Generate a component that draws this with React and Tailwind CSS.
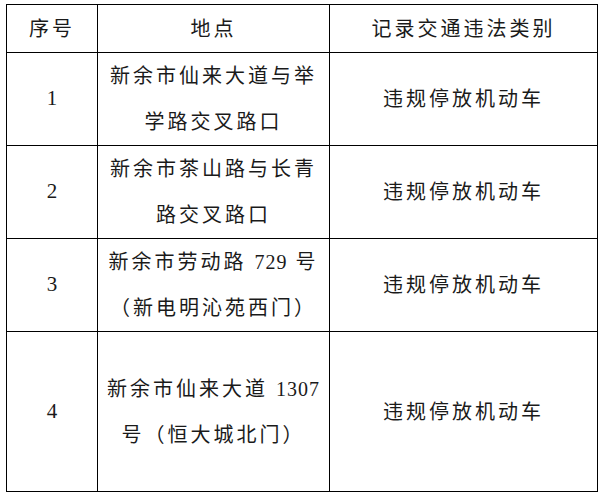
import React from 'react'

const Num = ({ children }) => <span className="tracking-[1px]">{children}</span>

const rows = [
  { no: '1', place: ['新余市仙来大道与举', '学路交叉路口'], h: 'h-[92px]' },
  { no: '2', place: ['新余市茶山路与长青', '路交叉路口'], h: 'h-[92px]' },
  {
    no: '3',
    place: [<>新余市劳动路 <Num>729</Num> 号</>, '（新电明沁苑西门）'],
    h: 'h-[93px]',
  },
  {
    no: '4',
    place: [<>新余市仙来大道 <Num>1307</Num></>, '号（恒大城北门）'],
    h: 'h-[160px]',
  },
]

const cell = 'border border-[#000] text-center align-middle p-0'

const App = () => {
  return (
    <div className="min-h-screen w-full bg-white pl-[6px] pt-[4px] text-[#1a1a1a] text-[20px] tracking-[3px] [font-family:'Liberation_Serif','Noto_Sans_CJK_SC',serif]">
      <table className="table-fixed border-collapse w-[591px]">
        <colgroup>
          <col className="w-[91px]" />
          <col className="w-[232px]" />
          <col className="w-[268px]" />
        </colgroup>
        <thead>
          <tr className="h-[48px]">
            <th className={`${cell} font-normal`}>序号</th>
            <th className={`${cell} font-normal`}>地点</th>
            <th className={`${cell} font-normal`}>记录交通违法类别</th>
          </tr>
        </thead>
        <tbody>
          {rows.map((r) => (
            <tr key={r.no} className={r.h}>
              <td className={`${cell} tracking-normal text-[21px]`}>{r.no}</td>
              <td className={`${cell} leading-[46px] whitespace-nowrap`}>
                {r.place.map((line, i) => (
                  <div key={i}>{line}</div>
                ))}
              </td>
              <td className={cell}>违规停放机动车</td>
            </tr>
          ))}
        </tbody>
      </table>
    </div>
  )
}

export default App
